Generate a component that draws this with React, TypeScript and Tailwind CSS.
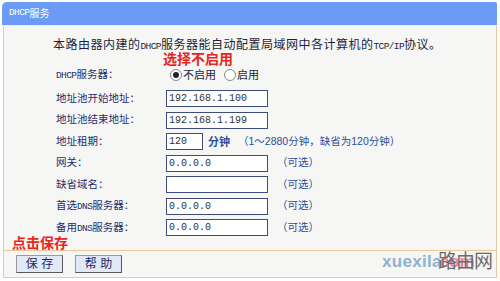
const cjk = "font-['Liberation_Sans','Noto_Sans_CJK_SC',sans-serif]";

function Small({ children }: { children: React.ReactNode }) {
  return <span className="font-['Liberation_Mono',monospace] text-[9.5px] tracking-[-0.6px]">{children}</span>;
}

function Input({ value, w = "w-[102px]" }: { value: string; w?: string }) {
  return (
    <div className={`${w} h-[17px] border border-[#3e4c7e] bg-white flex items-center pl-[2px] font-['Liberation_Mono',monospace] text-[10px] text-[#333]`}>
      {value}
    </div>
  );
}

function Radio({ checked }: { checked?: boolean }) {
  return (
    <span className="w-[12px] h-[12px] rounded-full border border-[#8a8a8a] bg-white flex items-center justify-center shrink-0">
      {checked && <span className="w-[6px] h-[6px] rounded-full bg-[#222]" />}
    </span>
  );
}

const rows: { label: React.ReactNode; value: string; hint?: boolean }[] = [
  { label: "地址池开始地址：", value: "192.168.1.100" },
  { label: "地址池结束地址：", value: "192.168.1.199" },
  { label: "地址租期：", value: "120" },
  { label: "网关：", value: "0.0.0.0", hint: true },
  { label: "缺省域名：", value: "", hint: true },
  { label: <>首选<Small>DNS</Small>服务器：</>, value: "0.0.0.0", hint: true },
  { label: <>备用<Small>DNS</Small>服务器：</>, value: "0.0.0.0", hint: true },
];

export default function App() {
  return (
    <div className={`w-[500px] h-[281px] bg-white pt-[2px] relative overflow-hidden ${cjk}`}>
      <div className="ml-[2px] w-[495px] h-[23px] bg-[#6b9bf5] rounded-tl-[5px] rounded-tr-[2px] flex items-center pl-[7px] text-white text-[10px]">
        <Small>DHCP</Small>服务
      </div>
      <div className="ml-[3px] w-[494px] h-[1px] bg-[#e6ecf6]" />

      <div className="ml-[3px] w-[494px] border-x border-b border-[#efc89a] bg-[#f6f6f4]">
        <div className="h-[224px] pt-[12px]">
          <div className="h-[14px] leading-[14px] pl-[49px] text-[12px] tracking-[0.5px] text-[#1c1f3d] whitespace-nowrap">
            本路由器内建的<Small>DHCP</Small>服务器能自动配置局域网中各计算机的<Small>TCP/IP</Small>协议。
          </div>
          <div className="h-[14px] leading-[14px] pl-[159px] text-[14px] font-bold text-[#e8241f]">选择不启用</div>

          <div className="h-[18px] pl-[52px] flex items-center text-[10.5px] text-[#1f2d6b]">
            <span className="w-[114px]"><Small>DHCP</Small>服务器：</span>
            <Radio checked />
            <span className="ml-[1px] text-[11px] text-[#1c1f3d]">不启用</span>
            <span className="ml-[8px]"><Radio /></span>
            <span className="ml-[1px] text-[11px] text-[#1c1f3d]">启用</span>
          </div>

          <div className="mt-[4px]">
            {rows.map((r, i) => (
              <div key={i} className="h-[21.5px] pl-[52px] flex items-center text-[10.5px] text-[#1f2d6b] whitespace-nowrap">
                <span className="w-[110px]">{r.label}</span>
                {r.value === "120" ? (
                  <>
                    <Input value="120" w="w-[37px]" />
                    <span className="ml-[5px] text-[11px] font-bold text-[#2c4c9c]">分钟</span>
                    <span className="ml-[8px] text-[10.5px] text-[#2c4c9c]">（1～2880分钟，缺省为120分钟）</span>
                  </>
                ) : (
                  <>
                    <Input value={r.value} />
                    {r.hint && <span className="ml-[9px] text-[10.5px] text-[#2c4c9c]">（可选）</span>}
                  </>
                )}
              </div>
            ))}
          </div>

          <div className="h-[11.5px] flex items-end pl-[8px]">
            <span className="leading-[14px] text-[14px] font-bold text-[#e8241f]">点击保存</span>
          </div>
        </div>

        <div className="h-[27px] border-t border-[#efc89a] pt-[4px] pl-[12px] flex gap-[12px]">
          {["保 存", "帮 助"].map(t => (
            <button key={t} className="w-[47px] h-[18px] bg-[#e2e8f6] border border-[#5a5a5a] border-t-[#9a9a9a] border-l-[#9a9a9a] text-[12px] leading-none text-[#1c2a60] flex items-center justify-center">
              {t}
            </button>
          ))}
        </div>
      </div>

      <div className="absolute left-[382px] top-[253px] h-[18px] flex items-center">
        <span className="font-['Liberation_Sans',sans-serif] font-bold text-[17px] text-[#8fb2d0] tracking-[0.3px]">xuexila</span>
        <span className="font-['Liberation_Sans',sans-serif] font-bold text-[17px] text-[#e77fa8] -ml-[2px]">com</span>
      </div>
      <div className="absolute left-[438px] top-[251px] text-[19px] leading-[22px] text-[#6b6b6b] tracking-[-1px]">路由网</div>
    </div>
  );
}
